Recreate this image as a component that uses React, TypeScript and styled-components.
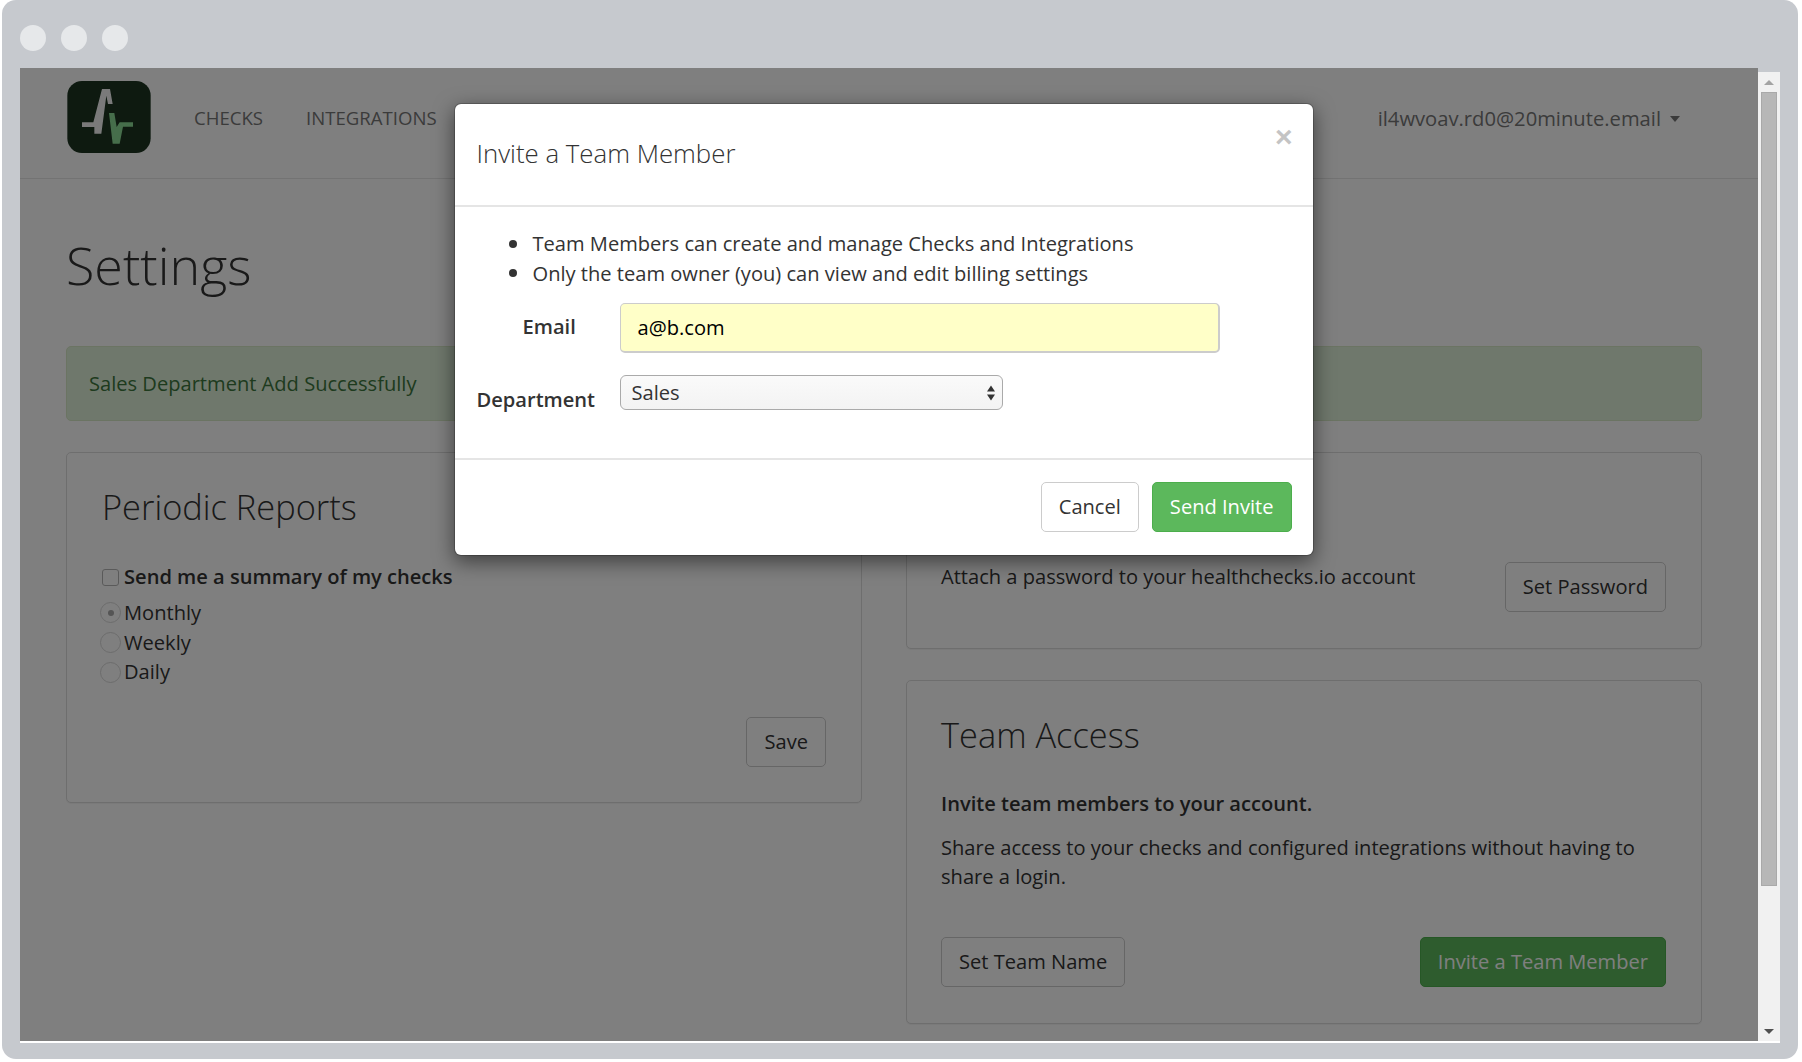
import React from "react";
import styled, { createGlobalStyle } from "styled-components";

const Global = createGlobalStyle`
  html, body { margin: 0; padding: 0; background: #fff; }
  body { font-family: "Open Sans", "Liberation Sans", sans-serif; font-size: 20.1px; line-height: 29.5px; color: #333; }
  * { box-sizing: border-box; }
`;

const Frame = styled.div`
  width: 1796px; height: 1059px; margin-left: 2px; background: #c6c9ce; border-radius: 14px;
  display: flex; flex-direction: column; overflow: hidden;
`;
const TitleBar = styled.div`
  height: 68px; flex: none; display: flex; align-items: flex-start; gap: 15px; padding: 25px 0 0 18px;
`;
const Dot = styled.span`
  width: 26px; height: 26px; border-radius: 50%; background: #e6e8ea;
`;
const Body = styled.div`
  display: flex; margin-left: 18px; width: 1760px; height: 975px; flex: none; border-bottom: 2px solid #fff; align-items: flex-start;
`;
const Page = styled.div`
  position: relative; width: 1738px; height: 973px; flex: none; background: #fff; overflow: hidden;
`;
const ScrollBar = styled.div`
  width: 22px; height: 969px; margin-top: 4px; flex: none; background: #f1f1f1; display: flex; flex-direction: column; align-items: center; padding: 8px 0 7px;
`;
const Thumb = styled.div`
  width: 16px; height: 794px; margin: 7px 0 auto; background: #b7b7b7; border: 1px solid #a9a9a9;
`;
const NavBar = styled.nav`
  height: 111px; border-bottom: 1px solid #e7e7e7; background: #fff; display: flex; align-items: flex-start; padding: 13px 78px 0 47px; color: #777;
`;
const LogoBox = styled.svg`
  width: 84px; height: 72px; flex: none;
`;
const NavLink = styled.a`
  font-size: 18.6px; line-height: 30px; margin-top: 22px; margin-left: 43px; color: #777;
`;
const UserMenu = styled.div`
  margin-left: auto; margin-top: 22px; font-size: 20.2px; line-height: 30px; color: #777; display: flex; align-items: center; gap: 9px;
`;
const Caret = styled.span`
  width: 0; height: 0; border-left: 5.5px solid transparent; border-right: 5.5px solid transparent; border-top: 6px solid #777; margin-top: 2px;
`;
const Container = styled.div`
  padding: 0 56px 0 46px;
`;
const H1 = styled.h1`
  font-size: 52px; font-weight: 300; line-height: 72px; margin: 50px 0 45px; color: #333;
`;
const Alert = styled.div`
  height: 75px; background: #dff0d8; border: 1px solid #d6e9c6; border-radius: 5px; color: #3c763d; padding: 0 22px; display: flex; align-items: center;
`;
const Columns = styled.div`
  display: grid; grid-template-columns: 796px 796px; gap: 44px; margin-top: 31px; align-items: start;
`;
const Stack = styled.div`
  display: flex; flex-direction: column; gap: 31px;
`;
const Panel = styled.section<{ $h: number; $left?: number }>`
  height: ${p => p.$h}px; border: 1px solid #ddd; border-radius: 5px; background: #fff; padding: 0 35px 0 ${p => p.$left ?? 35}px; box-shadow: 0 1px 1px rgba(0,0,0,.05); display: flex; flex-direction: column;
`;
const PanelTitle = styled.h2`
  font-size: 34.4px; font-weight: 300; line-height: 46px; margin: 31px 0 0; color: #333;
`;
const TitleSpace = styled.div`
  height: 46px; margin-top: 31px;
`;
const CheckRow = styled.div`
  display: flex; align-items: center; gap: 5px; font-weight: 600; margin-top: 32px; height: 30px;
`;
const CheckBox = styled.span`
  width: 17px; height: 17px; border: 1px solid #b5b5b5; border-radius: 3px; background: #fff; flex: none;
`;
const RadioGroup = styled.div`
  display: flex; flex-direction: column; margin-top: 6px;
`;
const RadioRow = styled.div`
  display: flex; align-items: center; height: 29.7px; gap: 3px; margin-left: -2px;
`;
const Radio = styled.span<{ $on?: boolean }>`
  width: 21px; height: 21px; border-radius: 50%; border: 1px solid #d8d8d8; background: #fff; flex: none; display: flex; align-items: center; justify-content: center;
  &::after { content: ""; width: 6px; height: 6px; border-radius: 50%; background: ${p => (p.$on ? "#aaa" : "transparent")}; }
`;
const Btn = styled.button<{ $green?: boolean }>`
  height: 50px; padding: 0 17px 1px; font: 400 20.1px "Open Sans", "Liberation Sans", sans-serif; border-radius: 5px; flex: none;
  background: ${p => (p.$green ? "#5cb85c" : "#fff")};
  border: 1px solid ${p => (p.$green ? "#4cae4c" : "#ccc")};
  color: ${p => (p.$green ? "#fff" : "#333")};
`;
const SaveRow = styled.div`
  display: flex; justify-content: flex-end; margin-top: 30px;
`;
const PasswordBody = styled.div`
  display: flex; justify-content: space-between; align-items: flex-start; margin-top: 32px;
`;
const PasswordText = styled.div`
  margin-top: 0;
`;
const Strong = styled.p`
  font-weight: 600; margin: 31px 0 0;
`;
const Para = styled.p`
  margin: 14px 0 0;
`;
const Split = styled.div`
  display: flex; justify-content: space-between; margin-top: 45px;
`;

const Overlay = styled.div`
  position: absolute; inset: 0; background: rgba(0,0,0,.5); display: flex; justify-content: center; align-items: flex-start; padding-top: 35px;
`;
const Modal = styled.div`
  width: 860px; height: 453px; margin-left: -11px; background: #fff; border-radius: 7px; box-shadow: 0 6px 20px rgba(0,0,0,.5); border: 1px solid rgba(0,0,0,.2); background-clip: padding-box; display: flex; flex-direction: column;
`;
const ModalHeader = styled.div`
  position: relative; height: 103px; border-bottom: 2px solid #e5e5e5; padding: 29px 22px 0;
`;
const ModalTitle = styled.h4`
  margin: 0; font-size: 25.8px; line-height: 40px; font-weight: 300; color: #333;
`;
const Close = styled.span`
  position: absolute; right: 20px; top: 15px; font-size: 30px; line-height: 36px; font-weight: 700; color: #c4c4c4; font-family: "Liberation Sans", sans-serif;
`;
const ModalBody = styled.div`
  flex: 1; padding: 22px 22px 0; border-bottom: 2px solid #e5e5e5;
`;
const Bullets = styled.ul`
  margin: 0; padding: 0 0 0 32px; list-style: none; line-height: 29.5px;
`;
const Bullet = styled.li`
  display: flex; align-items: center; gap: 16px;
  &::before { content: ""; width: 8px; height: 8px; border-radius: 50%; background: #333; flex: none; }
`;
const FormRow = styled.div`
  display: grid; grid-template-columns: 143px 1fr; align-items: center;
`;
const EmailRow = styled(FormRow)`
  margin-top: 15px;
`;
const DeptRow = styled(FormRow)`
  margin-top: 22px; align-items: flex-start;
`;
const EmailLabel = styled.label`
  font-weight: 600; padding-left: 46px; margin-top: -2px; color: #333;
`;
const DeptLabel = styled.label`
  font-weight: 600; margin-top: 10px; color: #333;
`;
const EmailInput = styled.div`
  width: 600px; height: 50px; background: #ffffc8; border: 2px solid #ccc; border-width: 1px 2px 2px 1px; border-radius: 5px; padding: 1px 17px 0; display: flex; align-items: center; color: #000;
`;
const SelectBox = styled.div`
  width: 383px; height: 35px; background: linear-gradient(#fafafa, #f3f3f3); border: 1.5px solid #aaa; border-radius: 6px; padding: 0 6px 0 11px; display: flex; align-items: center; justify-content: space-between; color: #333;
`;
const Arrows = styled.svg`
  width: 10px; height: 18px;
`;
const ModalFooter = styled.div`
  height: 95px; display: flex; justify-content: flex-end; align-items: flex-start; gap: 13px; padding: 22px 21px 0;
`;
const ArrowUp = styled.span`
  width: 0; height: 0; border-left: 5px solid transparent; border-right: 5px solid transparent; border-bottom: 5px solid #a3a3a3;
`;
const ArrowDown = styled.span`
  width: 0; height: 0; border-left: 5px solid transparent; border-right: 5px solid transparent; border-top: 5px solid #505050;
`;

export default function App() {
  return (
    <>
      <Global />
      <Frame>
        <TitleBar><Dot /><Dot /><Dot /></TitleBar>
        <Body>
          <Page>
            <NavBar>
              <LogoBox viewBox="50 32 250 216">
                <rect x="50" y="32" width="250" height="216" rx="44" fill="#1c3420" />
                <path d="M94 156 H128 L154 56 H178 L186 101 H172 L167 76 L152 190 H131 V170 H94 Z" fill="#f4f4f4" />
                <path d="M175 128 H191 L198 170 L207 156 H247 V169 H217 L207 220 H186 Z" fill="#8cdc96" />
              </LogoBox>
              <NavLink>CHECKS</NavLink>
              <NavLink>INTEGRATIONS</NavLink>
              <UserMenu>il4wvoav.rd0@20minute.email <Caret /></UserMenu>
            </NavBar>
            <Container>
              <H1>Settings</H1>
              <Alert>Sales Department Add Successfully</Alert>
              <Columns>
                <Panel $h={351}>
                  <PanelTitle>Periodic Reports</PanelTitle>
                  <CheckRow><CheckBox />Send me a summary of my checks</CheckRow>
                  <RadioGroup>
                    <RadioRow><Radio $on />Monthly</RadioRow>
                    <RadioRow><Radio />Weekly</RadioRow>
                    <RadioRow><Radio />Daily</RadioRow>
                  </RadioGroup>
                  <SaveRow><Btn>Save</Btn></SaveRow>
                </Panel>
                <Stack>
                  <Panel $h={197} $left={34}>
                    <TitleSpace />
                    <PasswordBody>
                      <PasswordText>Attach a password to your healthchecks.io account</PasswordText>
                      <Btn>Set Password</Btn>
                    </PasswordBody>
                  </Panel>
                  <Panel $h={344} $left={34}>
                    <PanelTitle>Team Access</PanelTitle>
                    <Strong>Invite team members to your account.</Strong>
                    <Para>Share access to your checks and configured integrations without having to share a login.</Para>
                    <Split>
                      <Btn>Set Team Name</Btn>
                      <Btn $green>Invite a Team Member</Btn>
                    </Split>
                  </Panel>
                </Stack>
              </Columns>
            </Container>
            <Overlay>
              <Modal>
                <ModalHeader>
                  <ModalTitle>Invite a Team Member</ModalTitle>
                  <Close>×</Close>
                </ModalHeader>
                <ModalBody>
                  <Bullets>
                    <Bullet>Team Members can create and manage Checks and Integrations</Bullet>
                    <Bullet>Only the team owner (you) can view and edit billing settings</Bullet>
                  </Bullets>
                  <EmailRow>
                    <EmailLabel>Email</EmailLabel>
                    <EmailInput>a@b.com</EmailInput>
                  </EmailRow>
                  <DeptRow>
                    <DeptLabel>Department</DeptLabel>
                    <SelectBox>
                      Sales
                      <Arrows viewBox="0 0 10 18">
                        <path d="M5 1.5 L9 7.5 H1 Z M1 10.5 H9 L5 16.5 Z" fill="#333" />
                      </Arrows>
                    </SelectBox>
                  </DeptRow>
                </ModalBody>
                <ModalFooter>
                  <Btn>Cancel</Btn>
                  <Btn $green>Send Invite</Btn>
                </ModalFooter>
              </Modal>
            </Overlay>
          </Page>
          <ScrollBar>
            <ArrowUp />
            <Thumb />
            <ArrowDown />
          </ScrollBar>
        </Body>
      </Frame>
    </>
  );
}
